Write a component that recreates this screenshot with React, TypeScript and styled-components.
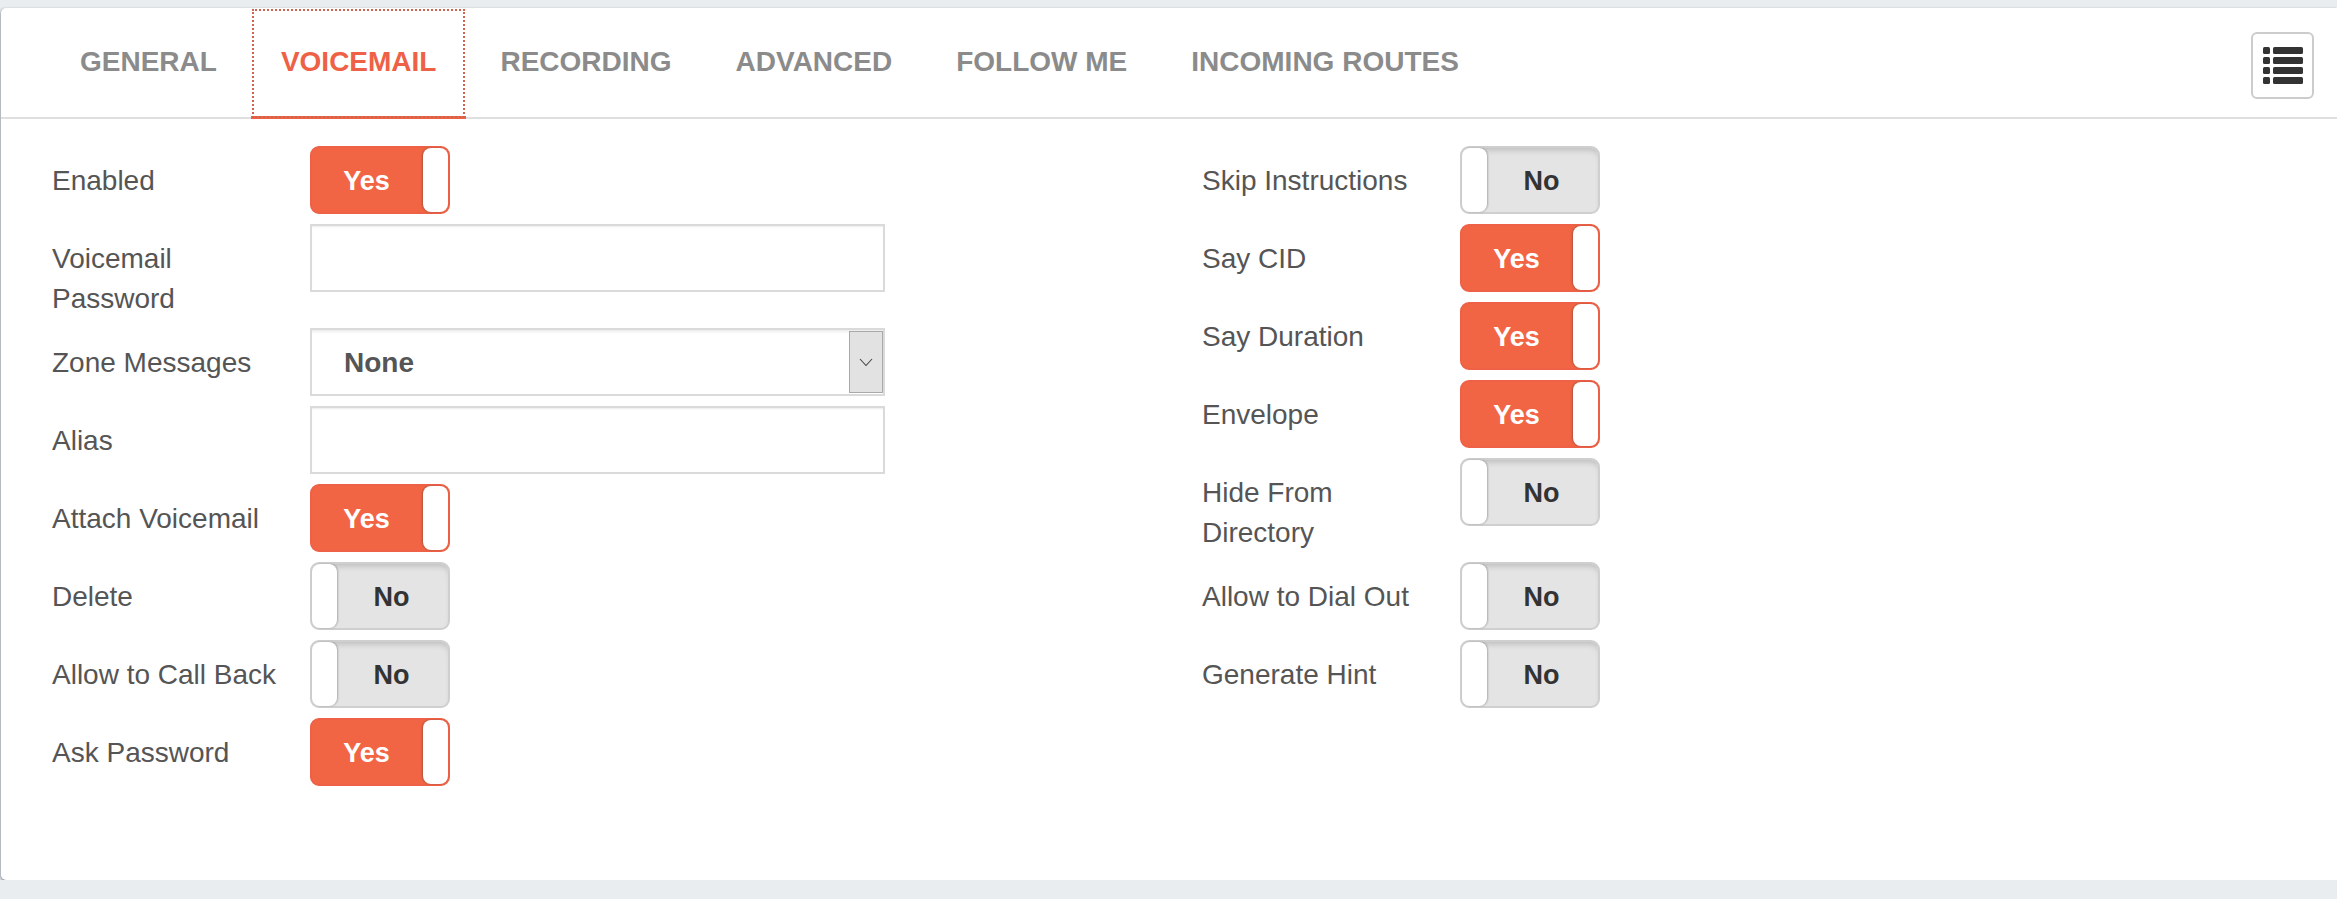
import React from "react";
import styled, { createGlobalStyle } from "styled-components";

const Global = createGlobalStyle`
  html, body { margin: 0; padding: 0; background: #e9edf0; overflow: hidden; }
  body { font-family: "Liberation Sans", Arial, sans-serif; }
`;

const Card = styled.div`
  box-sizing: border-box;
  margin: 8px 0 0 1px;
  height: 872px;
  background: #fff;
  border-radius: 5px 0 0 5px;
  box-shadow: 0 2px 3px rgba(60, 70, 80, 0.5), -1px 0 2px rgba(60, 70, 80, 0.2);
`;

const TabBar = styled.div`
  box-sizing: border-box;
  height: 111px;
  display: flex;
  align-items: flex-start;
  padding-left: 49px;
  gap: 4px;
  border-bottom: 2px solid #dfdfdf;
  position: relative;
`;

const Tab = styled.div<{ $active?: boolean }>`
  box-sizing: border-box;
  height: 111px;
  padding: 34px 30px 0;
  font-size: 28px;
  line-height: 40px;
  font-weight: 700;
  text-transform: uppercase;
  white-space: nowrap;
  color: ${(p) => (p.$active ? "#ee6146" : "#8b8b8b")};
  border-bottom: 3px solid ${(p) => (p.$active ? "#ee6146" : "transparent")};
  outline: ${(p) => (p.$active ? "2px dotted #d0654e" : "none")};
  outline-offset: -3px;
`;

const ListButton = styled.button`
  box-sizing: border-box;
  position: absolute;
  right: 23px;
  top: 24px;
  width: 63px;
  height: 67px;
  padding: 0;
  display: flex;
  align-items: center;
  justify-content: center;
  background: #fff;
  border: 2px solid #ccc;
  border-radius: 6px;
`;

const Form = styled.div`
  display: grid;
  grid-template-columns: 1150px 1fr;
  padding: 27px 0 0 51px;
`;

const Column = styled.div`
  display: flex;
  flex-direction: column;
  gap: 10px;
`;

const Row = styled.div`
  display: grid;
  grid-template-columns: 258px auto;
  justify-content: start;
  align-items: start;
`;

const Label = styled.div`
  box-sizing: border-box;
  width: 240px;
  padding-top: 15px;
  margin-bottom: -1px;
  font-size: 28px;
  line-height: 40px;
  color: #555;
`;

const Toggle = styled.div<{ $on: boolean }>`
  box-sizing: border-box;
  width: 140px;
  height: 68px;
  display: flex;
  flex-direction: ${(p) => (p.$on ? "row" : "row-reverse")};
  border-radius: 9px;
  border: 2px solid ${(p) => (p.$on ? "#ee6146" : "#cfcfcf")};
  background: ${(p) => (p.$on ? "#f26544" : "#e4e4e4")};
  box-shadow: ${(p) => (p.$on ? "none" : "inset 0 5px 6px -3px rgba(0,0,0,0.18)")};
`;

const ToggleText = styled.div<{ $on: boolean }>`
  flex: 1;
  display: flex;
  align-items: center;
  justify-content: center;
  padding: 2px 2px 0 0;
  font-size: 27px;
  font-weight: 700;
  color: ${(p) => (p.$on ? "#fff" : "#333")};
`;

const Thumb = styled.div<{ $on: boolean }>`
  width: 25px;
  background: #fff;
  border-radius: 8px;
  box-shadow: ${(p) =>
    p.$on ? "-1px 0 2px rgba(90,60,50,0.45)" : "1px 0 2px rgba(0,0,0,0.25)"};
`;

const TextField = styled.input`
  box-sizing: border-box;
  display: block;
  width: 575px;
  height: 68px;
  border: 2px solid #dadada;
  background: #fff;
  outline: none;
  box-shadow: inset 0 2px 2px -1px rgba(0, 0, 0, 0.08);
`;

const SelectBox = styled.div`
  box-sizing: border-box;
  width: 575px;
  height: 68px;
  display: flex;
  align-items: stretch;
  border: 2px solid #dadada;
  background: #fff;
  box-shadow: inset 0 4px 3px -2px rgba(0, 0, 0, 0.08);
`;

const SelectValue = styled.div`
  flex: 1;
  padding-left: 32px;
  font-size: 28px;
  line-height: 66px;
  font-weight: 700;
  color: #555;
`;

const SelectArrow = styled.div`
  box-sizing: border-box;
  width: 34px;
  margin: 1px 0 1px 0;
  display: flex;
  align-items: center;
  justify-content: center;
  background: #e2e2e2;
  border: 1px solid #a9a9a9;
`;

const ListIcon = () => (
  <svg width="40" height="37" viewBox="0 0 40 37" fill="#333">
    {[0, 10, 20, 30].map((y) => (
      <React.Fragment key={y}>
        <rect x="0" y={y} width="7" height="7" rx="1.5" />
        <rect x="10" y={y} width="30" height="7" rx="1.5" />
      </React.Fragment>
    ))}
  </svg>
);

const Chevron = () => (
  <svg width="14" height="9" viewBox="0 0 14 9" fill="none" stroke="#444" strokeWidth="1.1">
    <path d="M1 1l6 6.5L13 1" />
  </svg>
);

const Switch = ({ on }: { on: boolean }) => (
  <Toggle $on={on}>
    <ToggleText $on={on}>{on ? "Yes" : "No"}</ToggleText>
    <Thumb $on={on} />
  </Toggle>
);

type Field = { label: string; on?: boolean; kind?: "text" | "select" };

const left: Field[] = [
  { label: "Enabled", on: true },
  { label: "Voicemail Password", kind: "text" },
  { label: "Zone Messages", kind: "select" },
  { label: "Alias", kind: "text" },
  { label: "Attach Voicemail", on: true },
  { label: "Delete", on: false },
  { label: "Allow to Call Back", on: false },
  { label: "Ask Password", on: true },
];

const right: Field[] = [
  { label: "Skip Instructions", on: false },
  { label: "Say CID", on: true },
  { label: "Say Duration", on: true },
  { label: "Envelope", on: true },
  { label: "Hide From Directory", on: false },
  { label: "Allow to Dial Out", on: false },
  { label: "Generate Hint", on: false },
];

const tabs = ["General", "Voicemail", "Recording", "Advanced", "Follow Me", "Incoming Routes"];

const FieldRow = ({ field }: { field: Field }) => (
  <Row>
    <Label>{field.label}</Label>
    {field.kind === "text" ? (
      <TextField readOnly />
    ) : field.kind === "select" ? (
      <SelectBox>
        <SelectValue>None</SelectValue>
        <SelectArrow>
          <Chevron />
        </SelectArrow>
      </SelectBox>
    ) : (
      <Switch on={!!field.on} />
    )}
  </Row>
);

export default function App() {
  return (
    <>
      <Global />
      <Card>
        <TabBar>
          {tabs.map((t) => (
            <Tab key={t} $active={t === "Voicemail"}>
              {t}
            </Tab>
          ))}
          <ListButton aria-label="List">
            <ListIcon />
          </ListButton>
        </TabBar>
        <Form>
          <Column>
            {left.map((f) => (
              <FieldRow key={f.label} field={f} />
            ))}
          </Column>
          <Column>
            {right.map((f) => (
              <FieldRow key={f.label} field={f} />
            ))}
          </Column>
        </Form>
      </Card>
    </>
  );
}
